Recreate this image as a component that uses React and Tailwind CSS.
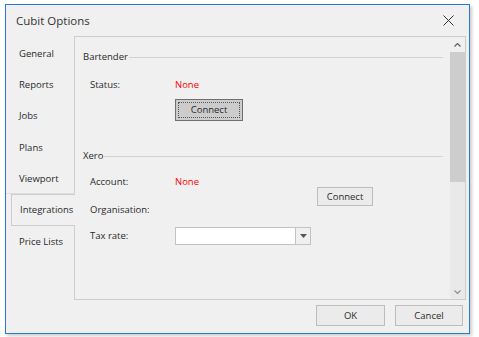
import React from 'react';

const tabs = ['General', 'Reports', 'Jobs', 'Plans', 'Viewport', 'Integrations', 'Price Lists'];

function Tab({ label, selected, underline }) {
    if (selected) {
        return (
            <div className="h-[31.3px] ml-[5px] flex items-center pl-[8px] bg-[#f0f0f0] border-l border-y border-[#cdcdcd]">
                {label}
            </div>
        );
    }
    return (
        <div className={`h-[31.3px] flex items-center pl-[13px] ${underline ? 'border-b border-[#dedede]' : ''}`}>
            {label}
        </div>
    );
}

function GroupHeader({ title }) {
    return (
        <div className="flex items-center h-[14px]">
            <span>{title}</span>
            <div className="flex-1 h-px bg-[#d2d2d2] ml-[1px]" />
        </div>
    );
}

function Button({ children, className }) {
    return (
        <div className={`flex items-center justify-center border border-[#bdbdbd] bg-[#ebebeb] ${className}`}>
            {children}
        </div>
    );
}

export default function App() {
    return (
        <div
            className="w-[479px] h-[337px] bg-white pl-[5px] pt-[4px] text-[#2a2a2a] text-[9.5px] leading-none"
            style={{ fontFamily: '"Open Sans", "Noto Sans", sans-serif' }}
        >
            <div className="w-[465px] h-[330px] bg-[#f0f0f0] border border-[#2b79d4] shadow-[2px_2px_3px_rgba(0,0,0,0.2)] flex flex-col">
                {/* title bar */}
                <div className="h-[31px] flex items-center pl-[10px] pr-[15px]">
                    <span className="text-[11.5px] text-[#333]">Cubit Options</span>
                    <svg className="ml-auto" width="11" height="11" viewBox="0 0 11 11">
                        <path d="M0.5 0.5 L10.5 10.5 M10.5 0.5 L0.5 10.5" stroke="#333" strokeWidth="1" />
                    </svg>
                </div>

                <div className="flex h-[264px]">
                    {/* tabs */}
                    <div className="w-[69px] -mr-px relative z-10 pt-[2px] flex flex-col">
                        {tabs.map((t) => (
                            <Tab key={t} label={t} selected={t === 'Integrations'} underline={t === 'Viewport'} />
                        ))}
                    </div>

                    {/* panel */}
                    <div className="w-[392px] border border-[#cdcdcd] flex">
                        <div className="flex-1 pt-[13px] pl-[8px] pr-[7px]">
                            <GroupHeader title="Bartender" />
                            <div className="flex items-center h-[14px] mt-[14px] pl-[7px]">
                                <span className="w-[85px]">Status:</span>
                                <span className="text-[#ff0000]">None</span>
                            </div>
                            <div className="ml-[92px] mt-[7px] w-[68px] h-[22px] border border-[#6f6f6f] bg-[#cccccc] p-[2px]">
                                <div className="w-full h-full border border-dotted border-[#555] flex items-center justify-center">
                                    Connect
                                </div>
                            </div>

                            <div className="mt-[28px]">
                                <GroupHeader title="Xero" />
                            </div>
                            <div className="flex">
                                <div className="w-[228px] pl-[7px]">
                                    <div className="flex items-center h-[14px] mt-[12px]">
                                        <span className="w-[85px]">Account:</span>
                                        <span className="text-[#ff0000]">None</span>
                                    </div>
                                    <div className="flex items-center h-[14px] mt-[14px]">
                                        <span className="w-[85px]">Organisation:</span>
                                    </div>
                                    <div className="flex items-center h-[18px] mt-[10px]">
                                        <span className="w-[85px]">Tax rate:</span>
                                        <div className="flex-1 h-full flex border border-[#c3c3c3] bg-white">
                                            <div className="flex-1" />
                                            <div className="w-[15px] border-l border-[#c3c3c3] bg-[#f0f0f0] flex items-center justify-center">
                                                <svg width="7" height="4" viewBox="0 0 7 4">
                                                    <path d="M0 0 L7 0 L3.5 4 Z" fill="#555" />
                                                </svg>
                                            </div>
                                        </div>
                                    </div>
                                </div>
                                <Button className="ml-[6px] mt-[24px] w-[56px] h-[19px]">Connect</Button>
                            </div>
                        </div>

                        {/* scrollbar */}
                        <div className="w-[15px] flex flex-col bg-[#e9e9e9]">
                            <div className="h-[15px] bg-[#f0f0f0] flex items-center justify-center">
                                <svg width="7" height="4" viewBox="0 0 7 4">
                                    <path d="M0.5 3.5 L3.5 0.5 L6.5 3.5" stroke="#606060" strokeWidth="1.2" fill="none" />
                                </svg>
                            </div>
                            <div className="h-[130px] bg-[#cdcdcd]" />
                            <div className="flex-1" />
                            <div className="h-[15px] flex items-center justify-center">
                                <svg width="7" height="4" viewBox="0 0 7 4">
                                    <path d="M0.5 0.5 L3.5 3.5 L6.5 0.5" stroke="#909090" strokeWidth="1.2" fill="none" />
                                </svg>
                            </div>
                        </div>
                    </div>
                </div>

                {/* footer buttons */}
                <div className="flex justify-end gap-[10px] pr-[6px] pt-[5px]">
                    <Button className="w-[69px] h-[21px]">OK</Button>
                    <Button className="w-[68px] h-[21px]">Cancel</Button>
                </div>
            </div>
        </div>
    );
}
